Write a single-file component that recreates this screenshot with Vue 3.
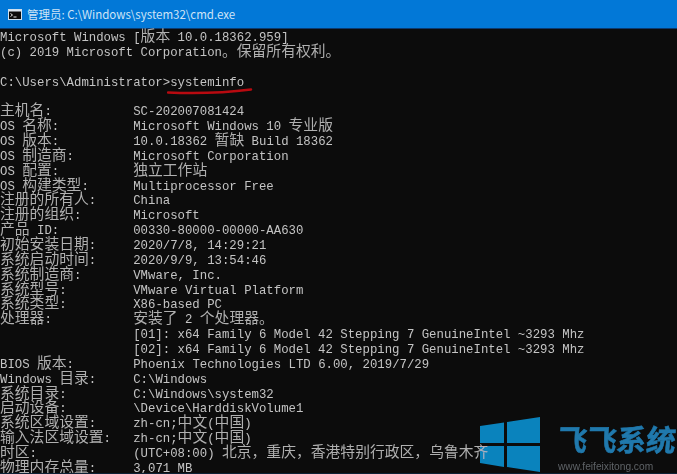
<script setup>
const rawLines = [
  'Microsoft Windows [版本 10.0.18362.959]',
  '(c) 2019 Microsoft Corporation。保留所有权利。',
  '',
  'C:\\Users\\Administrator>systeminfo',
  '',
  '主机名:           SC-202007081424',
  'OS 名称:          Microsoft Windows 10 专业版',
  'OS 版本:          10.0.18362 暂缺 Build 18362',
  'OS 制造商:        Microsoft Corporation',
  'OS 配置:          独立工作站',
  'OS 构建类型:      Multiprocessor Free',
  '注册的所有人:     China',
  '注册的组织:       Microsoft',
  '产品 ID:          00330-80000-00000-AA630',
  '初始安装日期:     2020/7/8, 14:29:21',
  '系统启动时间:     2020/9/9, 13:54:46',
  '系统制造商:       VMware, Inc.',
  '系统型号:         VMware Virtual Platform',
  '系统类型:         X86-based PC',
  '处理器:           安装了 2 个处理器。',
  '                  [01]: x64 Family 6 Model 42 Stepping 7 GenuineIntel ~3293 Mhz',
  '                  [02]: x64 Family 6 Model 42 Stepping 7 GenuineIntel ~3293 Mhz',
  'BIOS 版本:        Phoenix Technologies LTD 6.00, 2019/7/29',
  'Windows 目录:     C:\\Windows',
  '系统目录:         C:\\Windows\\system32',
  '启动设备:         \\Device\\HarddiskVolume1',
  '系统区域设置:     zh-cn;中文(中国)',
  '输入法区域设置:   zh-cn;中文(中国)',
  '时区:             (UTC+08:00) 北京，重庆，香港特别行政区，乌鲁木齐',
  '物理内存总量:     3,071 MB',
]
const lines = rawLines.map((text) =>
  text.split(/([\u3000-\u9fff\uff00-\uffef]+)/).filter(Boolean).map((t) => ({
    t,
    cjk: /[\u3000-\u9fff\uff00-\uffef]/.test(t),
  }))
)
</script>

<template>
  <div class="window">
    <header class="titlebar">
      <svg class="appicon" width="14" height="11" viewBox="0 0 14 11">
        <rect x="0.5" y="0.5" width="13" height="10" fill="#0c0c0c" stroke="#cfe0ee" />
        <rect x="1" y="1" width="12" height="1.5" fill="#dfe8f0" />
        <path d="M2.5 4.5l2 1.5-2 1.5M5.5 8h3" fill="none" stroke="#e8e8e8" stroke-width="1" />
      </svg>
      <span class="title">管理员: C:\Windows\system32\cmd.exe</span>
    </header>
    <main class="console">
      <div v-for="(segs, i) in lines" :key="i" class="line">
        <span v-for="(s, j) in segs" :key="j" :class="{ cjk: s.cjk }">{{ s.t }}</span>
      </div>
      <svg class="underline" width="86" height="8" viewBox="0 0 86 8">
        <path d="M1 5.5C25 6.5 60 5.5 84 2.5" fill="none" stroke="#b80a10" stroke-width="2.5" stroke-linecap="round" />
      </svg>
      <div class="watermark">
        <svg class="winlogo" width="61" height="56" viewBox="0 0 61 56">
          <path d="M0 9L24 5.5V26H0zM27 5L60 0V26H27zM0 29H24V50L0 46zM27 29H60V55L27 50z" fill="#0a83bd" />
        </svg>
        <div class="brand">
          <div class="brandname">飞飞系统</div>
          <div class="brandurl">www.feifeixitong.com</div>
        </div>
      </div>
    </main>
  </div>
</template>

<style>
html, body { margin: 0; background: #0c0c0c; }
</style>

<style scoped>
.window {
  width: 677px;
  height: 474px;
  box-sizing: border-box;
  overflow: hidden;
  display: flex;
  flex-direction: column;
  background: #0c0c0c;
  border-bottom: 1px solid #0c2236;
}
.titlebar {
  flex: 0 0 29px;
  box-sizing: border-box;
  display: flex;
  align-items: center;
  gap: 5px;
  padding-left: 8px;
  background: #0278d7;
  border-bottom: 1px solid #0b3a70;
}
.title {
  font: 11.5px "Noto Sans CJK SC", sans-serif;
  color: #cfe4f6;
}
.console {
  position: relative;
  flex: 1;
  padding-top: 2px;
  color: #c4c4c4;
  font: 12.33px/14.87px "Liberation Mono", "Noto Sans CJK SC", monospace;
  white-space: pre;
  filter: blur(0.3px);
}
.line { height: 14.87px; }
.cjk {
  font-family: "Noto Sans CJK SC", sans-serif;
  font-size: 14.8px;
  line-height: 0;
  color: #b0b0b0;
}
.underline { position: absolute; left: 167px; top: 58px; }
.watermark {
  position: absolute;
  left: 480px;
  top: 388px;
  display: flex;
  gap: 17px;
  font-family: "Liberation Sans", "Noto Sans CJK SC", sans-serif;
}
.winlogo { mix-blend-mode: lighten; }
.brandname {
  color: #2079ad;
  font: 700 29.5px/32px "Noto Sans CJK SC", sans-serif;
  -webkit-text-stroke: 0.6px #2079ad;
  transform: skewX(-6deg);
  margin-top: 5px;
}
.brandurl { color: #5f6367; font-size: 10.2px; line-height: 11px; margin-top: 7px; }
</style>
